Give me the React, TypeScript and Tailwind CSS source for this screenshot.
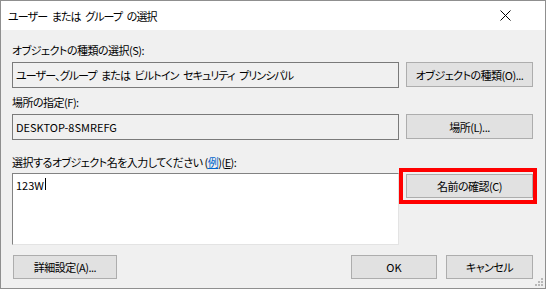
import React from 'react';

const font = "font-['Noto_Sans_CJK_JP',sans-serif] [font-feature-settings:'palt'] text-[11px] leading-[16px] tracking-[-0.5px] text-black whitespace-nowrap";

function Button({ children, className = '' }: { children: React.ReactNode; className?: string }) {
  return (
    <div
      className={`flex items-center justify-center bg-[#e1e1e1] border border-[#adadad] ${className}`}
    >
      {children}
    </div>
  );
}

export default function App() {
  return (
    <div className={`relative w-[546px] h-[289px] border border-[#8f8f8f] bg-[#f0f0f0] flex flex-col ${font}`}>
      {/* タイトルバー */}
      <div className="h-[29px] bg-white flex items-center justify-between pl-[7px] pr-[34px]">
        <span className="tracking-[-0.9px] [word-spacing:3px]">ユーザー または グループ の選択</span>
        <svg width="11" height="11" viewBox="0 0 11 11">
          <path d="M0.5 0.5 L10.5 10.5 M10.5 0.5 L0.5 10.5" stroke="#000" strokeWidth="1" />
        </svg>
      </div>

      <div className="flex-1 flex flex-col pl-[11px] pr-[12px]">
        {/* オブジェクトの種類 */}
        <div className="mt-[12px] h-[16px]">オブジェクトの種類の選択(S):</div>
        <div className="mt-[4px] flex gap-[7px]">
          <div className="w-[387px] h-[26px] border border-[#7a7a7a] flex items-center pl-[3px] tracking-[-0.9px] [word-spacing:3px]">
            ユーザー、グループ または ビルトイン セキュリティ プリンシパル
          </div>
          <Button className="w-[127px] h-[25px]">オブジェクトの種類(O)...</Button>
        </div>

        {/* 場所 */}
        <div className="mt-[6px] h-[16px]">場所の指定(F):</div>
        <div className="mt-[4px] flex gap-[7px]">
          <div className="w-[387px] h-[26px] border border-[#7a7a7a] flex items-center pl-[3px] tracking-normal">
            DESKTOP-8SMREFG
          </div>
          <Button className="w-[127px] h-[25px]">場所(L)...</Button>
        </div>

        {/* オブジェクト名 */}
        <div className="mt-[14px] h-[16px]">
          選択するオブジェクト名を入力してください (
          <span className="text-[#0066cc] underline">例</span>)(<span className="underline">E</span>):
        </div>
        <div className="mt-[3px] flex gap-[7px] items-start">
          <div className="w-[387px] h-[72px] border-t border-l border-[#828282] border-r-[#e3e3e3] border-b-[#e3e3e3] border-r border-b bg-white pl-[3px] pt-[3px] flex items-start tracking-normal">
            <span>123W</span>
            <span className="ml-[1px] mt-[1px] w-[1px] h-[12px] bg-black" />
          </div>
          <div className="relative mt-[1px]">
            <Button className="w-[127px] h-[24px]">名前の確認(C)</Button>
            <div className="absolute -left-[7px] -right-[4px] -top-[6px] -bottom-[6px] border-4 border-[#ff0000]" />
          </div>
        </div>

        {/* 下部ボタン */}
        <div className="mt-[10px] flex items-center">
          <Button className="ml-[1px] w-[104px] h-[24px]">詳細設定(A)...</Button>
          <div className="flex-1" />
          <Button className="w-[86px] h-[24px] tracking-normal">OK</Button>
          <Button className="ml-[9px] w-[87px] h-[24px]">キャンセル</Button>
        </div>
      </div>

      {/* サイズ変更グリップ */}
      <svg className="absolute right-[1px] bottom-[1px]" width="10" height="10" viewBox="0 0 10 10">
        <rect x="7" y="1" width="2" height="2" fill="#b8b8b8" />
        <rect x="4" y="4" width="2" height="2" fill="#b8b8b8" />
        <rect x="7" y="4" width="2" height="2" fill="#b8b8b8" />
        <rect x="1" y="7" width="2" height="2" fill="#b8b8b8" />
        <rect x="4" y="7" width="2" height="2" fill="#b8b8b8" />
        <rect x="7" y="7" width="2" height="2" fill="#b8b8b8" />
      </svg>
    </div>
  );
}
